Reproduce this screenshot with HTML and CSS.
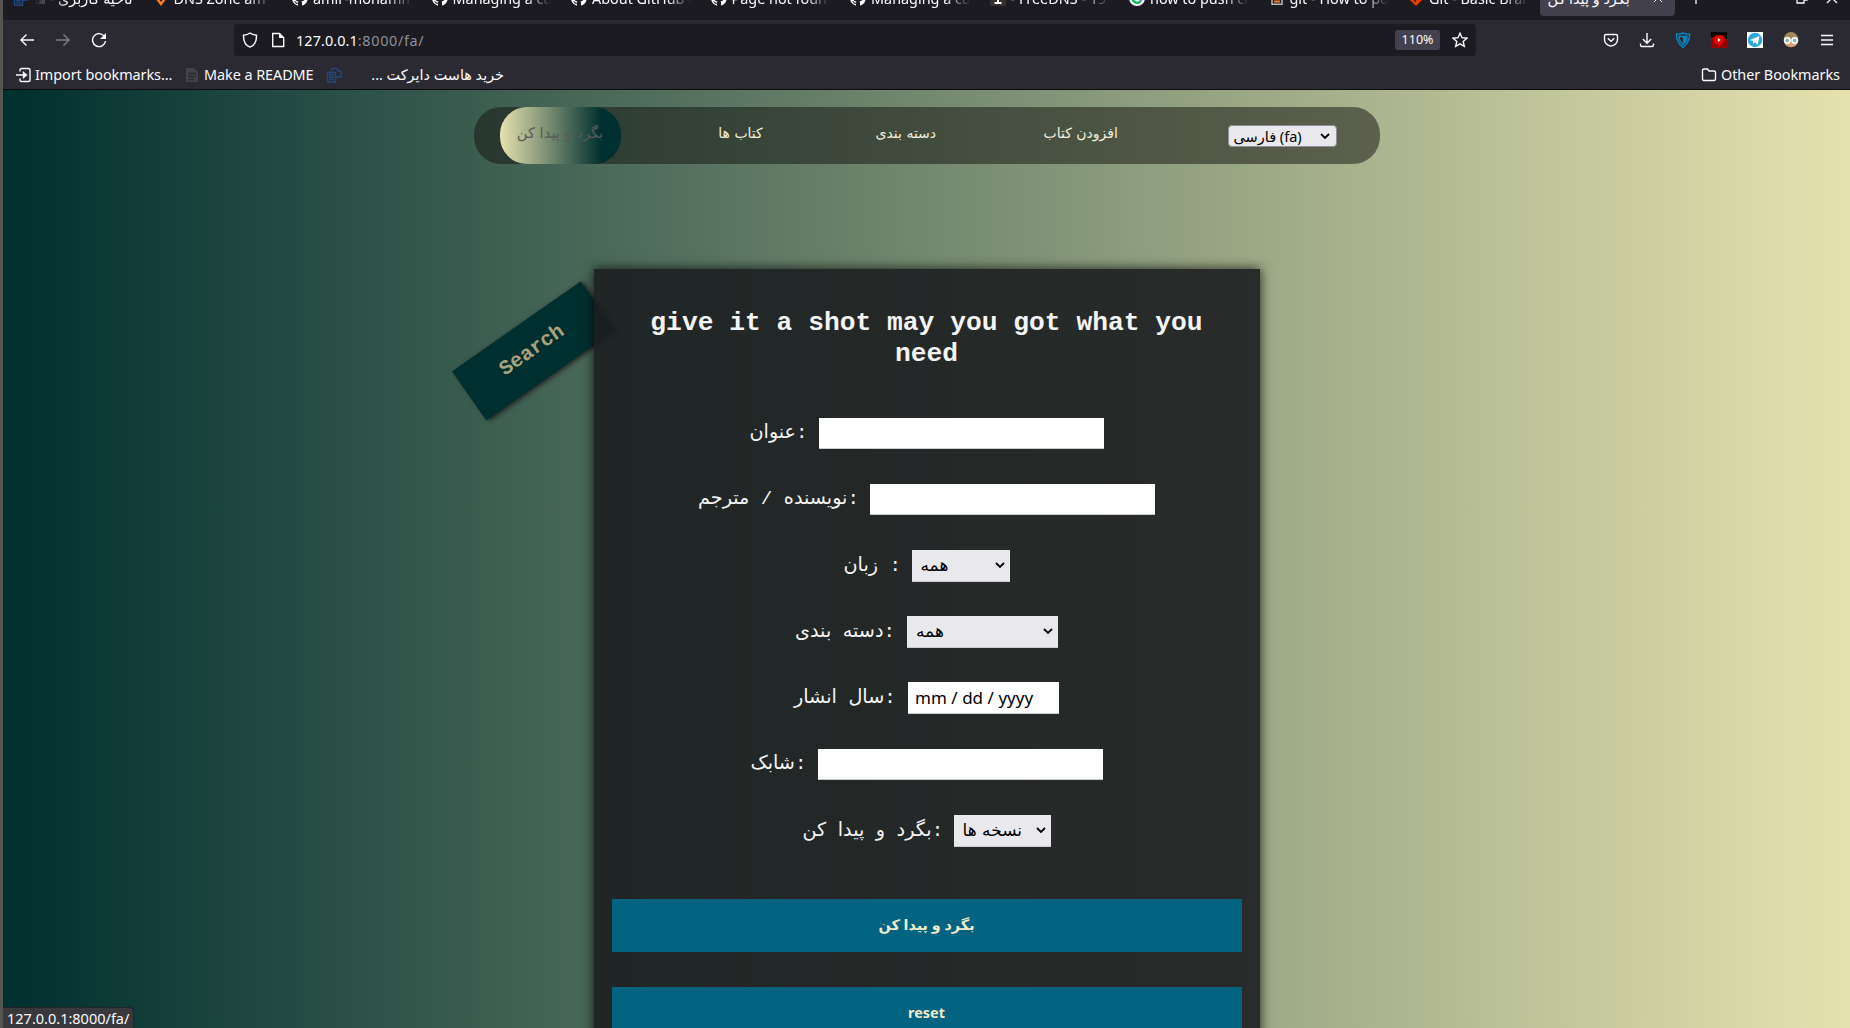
FILE: index.html
```html
<!DOCTYPE html>
<html lang="en">
<head>
<meta charset="utf-8">
<title>بگرد و پیدا کن</title>
<link rel="stylesheet" href="styles.css">
</head>
<body>
<svg class="defs" width="0" height="0">
  <symbol id="cat" viewBox="0 0 16 16"><path fill="#fff" d="M8 0a8 8 0 0 0-2.5 15.6c.4.1.5-.2.5-.4v-1.500c-2.200.5-2.700-1-2.700-1-.4-.9-.9-1.200-.9-1.200-.7-.5.1-.5.1-.5.8.1 1.200.8 1.200.8.7 1.300 1.900.9 2.300.7.1-.5.3-.9.5-1.100-1.800-.2-3.600-.9-3.600-4 0-.9.3-1.600.8-2.100-.1-.2-.4-1 .1-2.100 0 0 .7-.2 2.200.8a7.500 7.500 0 0 1 4 0c1.500-1 2.200-.8 2.200-.8.4 1.100.2 1.900.1 2.100.5.6.8 1.300.8 2.100 0 3.100-1.900 3.700-3.700 3.900.3.3.6.8.6 1.500v2.200c0 .2.1.5.6.4A8 8 0 0 0 8 0z"/></symbol>
  <symbol id="book" viewBox="0 0 16 16"><path fill="none" stroke="#1f4a80" stroke-width="1.500" d="M5.500 4V3q0-1.500 1.500-1.500h3.500Q12 1.500 12 3v1h1.500q1.500 0 1.500 1.500v3q0 1.500-1.500 1.500H9.500M1.500 5.500h8v9.500h-8zM3 8h5M3 10.300h5M3 12.600h5"/></symbol>
  <symbol id="chev" viewBox="0 0 10 10"><path fill="none" stroke="#000" stroke-width="1.800" d="M1 3l4 4 4-4"/></symbol>
</svg>
<div class="window">
  <header class="chrome">
    <div class="tabs">
      <div class="tab"><svg><use href="#book"/></svg><span class="rtl" dir="rtl">ناحیه کاربری - هاست</span></div>
      <div class="tab"><svg viewBox="0 0 16 16"><path fill="none" stroke="#f6821f" stroke-width="2.500" d="M8 14C4 9 3 7.500 3 5h10c0 2.500-1 4-5 9z"/><circle cx="8" cy="7" r="1.500" fill="#f6821f"/></svg><span>DNS Zone am-host</span></div>
      <div class="tab"><svg><use href="#cat"/></svg><span>amir-mohammadi</span></div>
      <div class="tab"><svg><use href="#cat"/></svg><span>Managing a custom</span></div>
      <div class="tab"><svg><use href="#cat"/></svg><span>About GitHub Pages</span></div>
      <div class="tab"><svg><use href="#cat"/></svg><span>Page not found</span></div>
      <div class="tab"><svg><use href="#cat"/></svg><span>Managing a custom</span></div>
      <div class="tab"><svg viewBox="0 0 16 16"><path fill="#33302f" d="M0 0h16v16H0z"/><path stroke="#fff" stroke-width="2" d="M8 3v10M4.500 13h7"/></svg><span>- FreeDNS - 19.216</span></div>
      <div class="tab"><svg viewBox="0 0 16 16"><circle cx="8" cy="8" r="8" fill="#fff"/><path fill="none" stroke="#14b85a" stroke-width="2.500" d="M3.500 8a4.500 4.500 0 0 0 8 3"/><path fill="none" stroke="#4285f4" stroke-width="2.500" d="M11.500 11q1-1.500 1-3"/></svg><span>how to push changes</span></div>
      <div class="tab"><svg viewBox="0 0 16 16"><path fill="none" stroke="#b8bcc2" stroke-width="1.500" d="M3 9v5.200h10V9"/><path stroke="#f48024" stroke-width="2" d="M5 11.500h6M5 8.500l6 .5"/></svg><span>git - How to push</span></div>
      <div class="tab"><svg viewBox="0 0 16 16"><path fill="#f03c00" d="M8 0l8 8-8 8-8-8z"/><path stroke="#1c1b22" stroke-width="1.500" d="M7 4v8"/></svg><span>Git - Basic Branching</span></div>
      <div class="tab active"><span class="rtl">بگرد و پیدا کن</span><svg class="close" viewBox="0 0 10 10"><path stroke="#fbfbfe" d="M1 1l8 8M9 1L1 9"/></svg></div>
      <div class="wincontrols">
        <svg viewBox="0 0 16 20"><path stroke="#fbfbfe" stroke-width="1.300" d="M8 4v12M2 10h12"/></svg>
        <svg viewBox="0 0 16 20"><path fill="none" stroke="#fbfbfe" stroke-width="1.300" d="M3 8h7v7H3zM6 8V5h7v7h-3"/></svg>
        <svg viewBox="0 0 16 20"><path stroke="#fbfbfe" stroke-width="1.300" d="M3 5l10 10M13 5L3 15"/></svg>
      </div>
    </div>
    <div class="toolbar">
      <div class="navbtns">
        <svg viewBox="0 0 16 16"><path d="M15 8H2M7.500 2.500L2 8l5.500 5.500"/></svg>
        <svg class="dim" viewBox="0 0 16 16"><path d="M1 8h13M8.500 2.500L14 8l-5.500 5.500"/></svg>
        <svg viewBox="0 0 16 16"><path d="M13.500 4.500A6.500 6.500 0 1 0 14.500 9"/><path fill="#fbfbfe" stroke="none" d="M15 1v6H9z"/></svg>
      </div>
      <div class="url">
        <svg viewBox="0 0 16 16"><path d="M8 1c2 1.500 4 2 6.500 2.200C14.700 9 12.500 13.500 8 15.200 3.500 13.500 1.300 9 1.500 3.200 4 3 6 2.500 8 1z"/></svg>
        <svg viewBox="0 0 16 16"><path d="M2.700 1.500H9.500L13.700 5.700v8.800h-11z"/><path fill="#fbfbfe" stroke="none" d="M9 1l5 5H9z"/></svg>
        <span class="host">127.0.0.1</span><span class="path">:8000/fa/</span>
        <span class="zoom">110%</span>
        <svg class="star" viewBox="0 0 16 16"><path d="M8 1.200l2 4.500 4.900.5-3.700 3.200 1.100 4.900L8 11.800l-4.300 2.500 1.100-4.900L1.100 6.200 6 5.700z"/></svg>
      </div>
      <div class="tools">
        <svg viewBox="0 0 16 16"><path d="M3 2.500h10q1.500 0 1.500 1.500v3.500a6.500 6.500 0 0 1-13 0V4Q1.500 2.500 3 2.500zM4.800 6.200L8 9.300l3.200-3.100"/></svg>
        <svg viewBox="0 0 16 16"><path d="M8 1v10M3.800 7L8 11.200 12.200 7M1.500 11.500V13q0 1.500 1.500 1.500h10q1.500 0 1.500-1.500v-1.500"/></svg>
        <svg viewBox="0 0 16 16"><path stroke="#0a84c1" d="M8 1q3 1.500 6.500 1Q15 10 8 15.500 1 10 1.500 2 5 2.500 8 1z"/><path stroke="#0a84c1" d="M4 4.500h8Q12 9.500 8 12.800 4 9.500 4 4.500z"/><path fill="#0a84c1" stroke="none" d="M8 5h3.500Q11.500 9 8 12z"/></svg>
        <svg viewBox="0 0 16 16"><path fill="#000" stroke="none" d="M0 0h16v16H0z"/><path fill="#900" stroke="none" d="M0 5h3l2-2h7l3 4h1v9H0z"/><circle cx="8" cy="8" r="5" fill="#e30000" stroke="none"/><path fill="#fff" stroke="none" d="M6.800 6l3 2-3 2z"/></svg>
        <svg viewBox="0 0 16 16"><path fill="#fff" stroke="none" d="M0 0h16v16H0z"/><circle cx="8" cy="8" r="7.200" fill="#2ca5e0" stroke="none"/><path fill="#fff" stroke="none" d="M3 8l9.500-4-1.800 8.500-3-2.200-1.400 1.400-.5-2.800z"/></svg>
        <svg viewBox="0 0 16 16"><circle cx="8" cy="8" r="7.300" fill="#d6a074" stroke="none"/><path fill="#a28a5c" stroke="none" d="M1 7a7 7 0 0 1 14 0z"/><g fill="#87b5bd" stroke="#fff" stroke-width="1.500"><circle cx="4.300" cy="8.500" r="2.700"/><circle cx="11.700" cy="8.500" r="2.700"/></g></svg>
        <svg viewBox="0 0 16 16"><path d="M2 3.500h12M2 8h12M2 12.500h12"/></svg>
      </div>
    </div>
    <div class="bookmarks">
      <svg viewBox="0 0 16 16"><path d="M4 4.500V3q0-1.500 1.500-1.500h7Q14 1.500 14 3v10q0 1.500-1.500 1.500h-7Q4 14.500 4 13v-1.500M0 8h9"/><path fill="#fbfbfe" d="M7.500 5.500L10.500 8l-3 2.500z"/></svg>
      <span class="bm1">Import bookmarks…</span>
      <svg class="doc" viewBox="0 0 16 16"><path fill="#42424a" stroke="none" d="M2 1h8l4 4v10H2z"/><path stroke="#2b2a33" d="M4 6.500h8M4 9.500h8M4 12.500h6"/></svg>
      <span class="bm2">Make a README</span>
      <svg class="host-icon"><use href="#book"/></svg>
      <span class="bm3" dir="rtl">خرید هاست دایرکت ...</span>
      <svg class="folder" viewBox="0 0 16 16"><path d="M1.500 3.500Q1.500 2 3 2h3.500L8 4h5q1.500 0 1.500 1.500V12q0 1.500-1.500 1.500H3Q1.500 13.500 1.500 12z"/></svg>
      <span class="bm4">Other Bookmarks</span>
    </div>
  </header>
  <main class="page">
    <nav class="menu">
      <a class="current">بگرد و پیدا کن</a>
      <a class="m2">کتاب ها</a>
      <a class="m3">دسته بندی</a>
      <a class="m4">افزودن کتاب</a>
      <div class="lang"><span dir="ltr">فارسی (fa)</span><svg><use href="#chev"/></svg></div>
    </nav>
    <section class="search">
      <div class="tag">Search</div>
      <form class="panel">
        <h1>give it a shot may you got what you need</h1>
        <div class="row"><label class="l1">عنوان:</label><div class="field text"></div></div>
        <div class="row"><label class="l2">نویسنده / مترجم:</label><div class="field text"></div></div>
        <div class="row"><label class="l3">زبان :</label><div class="field pick s1"><span>همه</span><svg><use href="#chev"/></svg></div></div>
        <div class="row"><label class="l4">دسته بندی:</label><div class="field pick s2"><span>همه</span><svg><use href="#chev"/></svg></div></div>
        <div class="row"><label class="l5">سال انشار:</label><div class="field date"><span>mm</span><span>/</span><span>dd</span><span>/</span><span>yyyy</span></div></div>
        <div class="row"><label class="l6">شابک:</label><div class="field text"></div></div>
        <div class="row"><label class="l7">بگرد و پیدا کن:</label><div class="field pick s3"><span>نسخه ها</span><svg><use href="#chev"/></svg></div></div>
        <div class="btn first">بگرد و پیدا کن</div>
        <div class="btn">reset</div>
      </form>
    </section>
  </main>
  <div class="status">127.0.0.1:8000/fa/</div>
</div>
</body>
</html>
```
FILE: styles.css
```css
* { box-sizing: border-box; }
body { margin: 0; background: #555552; font-family: "Noto Sans", "DejaVu Sans", sans-serif; overflow: hidden; }
.defs { position: absolute; }
.window { height: 1028px; margin-left: 3px; display: flex; flex-direction: column; overflow: hidden; position: relative; }
.chrome { flex: none; height: 90px; background: #2b2a33; border-bottom: 1px solid #0c0c0d; color: #fbfbfe; font-size: 14.4px; }
.chrome svg { flex: none; width: 16px; height: 16px; }

.tabs { height: 20px; background: #1c1b22; display: flex; align-items: flex-end; overflow: hidden; padding-bottom: 4px; }
.tab { flex: none; width: 139.5px; height: 36px; padding: 0 10px; display: flex; align-items: center; gap: 5px; }
.tab span { flex: 1; overflow: hidden; white-space: nowrap; mask-image: linear-gradient(to right, #000 75%, transparent); }
.tab span.rtl { mask-image: none; }
.tab:first-child span.rtl { mask-image: linear-gradient(to left, #000 65%, transparent); }
.tab.active { width: 135px; margin-left: 2px; padding: 0 8px; background: #42414d; border-radius: 4px; }
.tab .close { width: 10px; height: 10px; margin-right: 4px; }
.wincontrols { flex: 1; height: 36px; display: flex; align-items: center; padding-left: 13px; }
.wincontrols svg { height: 20px; }
.wincontrols svg:nth-child(2) { margin-left: 90px; }
.wincontrols svg:nth-child(3) { margin-left: 14px; }

.toolbar { height: 40px; display: flex; align-items: center; }
.toolbar svg, .bookmarks svg { fill: none; stroke: #fbfbfe; stroke-width: 1.4; }
.navbtns { width: 231px; padding-left: 16px; display: flex; gap: 20px; }
.navbtns .dim { opacity: .4; }
.url { width: 1242px; height: 32px; border-radius: 4px; background: #1c1b22; display: flex; align-items: center; padding-left: 8px; }
.url svg + svg { margin-left: 12px; }
.url .host { margin-left: 10px; letter-spacing: .1px; }
.url .path { color: #8f8f96; letter-spacing: .65px; }
.zoom { margin-left: auto; width: 45px; height: 20px; border-radius: 3px; background: #42414d; font-size: 12.5px; line-height: 20px; text-align: center; }
.url .star { margin: 0 8px 0 12px; }
.tools { flex: 1; display: flex; justify-content: flex-end; gap: 20px; padding-right: 15px; }
.bookmarks { height: 29px; display: flex; align-items: center; padding: 0 11px 0 13px; }
.bookmarks span { white-space: nowrap; flex: none; }
.bm1 { width: 152px; padding-left: 3px; letter-spacing: -.05px; }
.bm2 { width: 126px; padding-left: 4px; letter-spacing: -.05px; }
.bm3 { width: 155px; margin-left: 7px; }
.folder { margin-left: auto; }
.bm4 { width: 122px; padding-left: 4px; letter-spacing: -.05px; }

.page { flex: 1; background: linear-gradient(to right, #002f2f, #e6e2af); padding-top: 17px; display: flex; flex-direction: column; align-items: center; }
.menu { flex: none; width: 906px; height: 57px; border-radius: 27px; background: rgba(23, 23, 19, .53); display: flex; align-items: center; padding-left: 26px; font: 14px "DejaVu Sans", sans-serif; color: #f2f0dc; }
.menu a { white-space: nowrap; text-align: center; flex: none; line-height: 52px; height: 57px; }
.menu .current { width: 121px; border-radius: 27px; background: linear-gradient(to right, #e6e2af, #002f2f 84%); color: #595959; font-size: 14.7px; }
.m2 { width: 46px; margin-left: 97px; }
.m3 { width: 58px; margin-left: 112px; }
.m4 { width: 72px; margin-left: 110px; }
.lang { width: 109px; height: 22px; margin-left: 112px; border: 1px solid #8f8f9d; border-radius: 4px; background: #e9e9ed; color: #000; font: 14.5px/20px "Noto Sans", "DejaVu Sans", sans-serif; display: flex; align-items: center; justify-content: space-between; padding: 0 6px 0 5px; }
.lang svg { width: 10px; height: 10px; }

.search { margin-top: 105px; width: 666px; flex: 1; position: relative; }
.tag { position: absolute; left: -139px; top: 52px; width: 157px; height: 60px; transform: rotate(-35deg); background: #002f2f; color: #a7a37e; font: bold 20.5px/58px "Liberation Mono", monospace; padding-right: 2px; text-align: center; box-shadow: 2px 2px 5px #222; }
.panel { position: relative; height: 100%; background: rgba(28, 30, 32, .9); box-shadow: 0 0 11px rgba(0, 0, 0, .8); padding: 39px 18px 0; }
h1 { margin: 0 0 47px; font: bold 26.3px/31px "Liberation Mono", monospace; color: #f4f4f4; text-align: center; }
.row { height: 32px; margin-bottom: 34.3px; display: flex; align-items: center; justify-content: center; color: #f4f4f4; }
.row label { flex: none; white-space: nowrap; font: 19.2px/32px "Liberation Mono", "DejaVu Sans", monospace; }
.l1 { width: 69px; } .l2 { width: 172px; } .l3 { width: 68px; } .l4 { width: 112px; }
.l5 { width: 114px; } .l6 { width: 67px; } .l7 { width: 151px; }
.field { height: 32px; background: #fff; color: #000; border-bottom: 1px solid #ccc; font-size: 17.6px; }
.text { width: 285px; height: 31px; }
.pick { background: #e9e9ed; display: flex; align-items: center; justify-content: space-between; padding: 0 5px 0 9px; }
.pick span { font-family: "DejaVu Sans", sans-serif; font-size: 17px; }
.pick svg { width: 10px; height: 10px; }
.s1 { width: 98px; } .s2 { width: 151px; } .s3 { width: 97px; }
.date { width: 151px; display: flex; align-items: center; padding-left: 7px; gap: 4.5px; font-size: 17px; }
.btn { height: 53px; margin-bottom: 35px; background: #046380; color: #efecca; font: bold 14.4px/52px "Noto Sans", "DejaVu Sans", sans-serif; text-align: center; }
.btn.first { margin-top: 52.3px; }
.status { position: absolute; left: 0; bottom: 0; width: 131px; height: 21px; padding-left: 4px; background: #38383d; border: 1px solid #252528; border-width: 1px 1px 0 0; border-top-right-radius: 4px; color: #fbfbfe; font-size: 14.5px; line-height: 21px; }
```
